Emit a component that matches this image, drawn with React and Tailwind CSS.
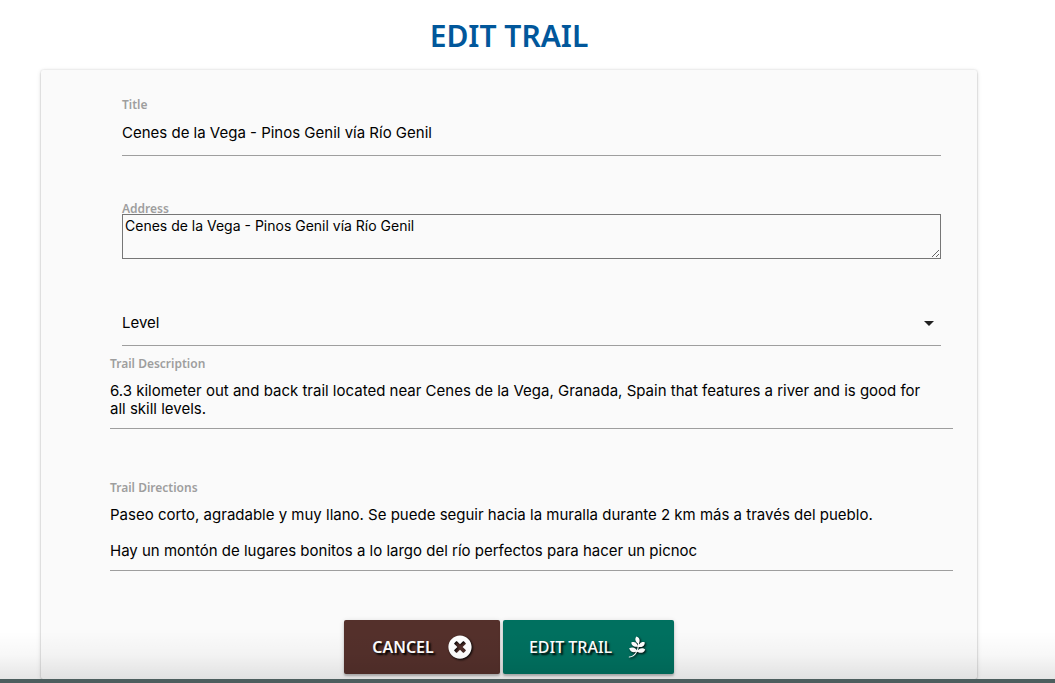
import React from "react";
import { FaTimesCircle, FaPagelines } from "react-icons/fa";

const labelClass = "block text-[12px] font-semibold text-[#9e9e9e] font-['Noto_Sans',sans-serif]";
const lineClass =
  "block w-full border-b border-[#9e9e9e] bg-transparent text-[15px] text-black outline-none font-[Inter,sans-serif]";
const buttonClass =
  "flex h-[54px] items-center justify-center rounded-xs text-base text-white shadow-[0_2px_2px_rgba(0,0,0,0.2),0_1px_5px_rgba(0,0,0,0.15)]";

export default function App() {
  return (
    <div className="relative overflow-hidden bg-white font-['Noto_Sans',sans-serif]">
      <main className="pl-[41px] pr-[78px]">
        <h1 className="pt-4 pb-[14px] text-center text-[30px] leading-10 font-semibold text-[#01579b]">
          EDIT TRAIL
        </h1>
        <form
          className="rounded-xs bg-[#fafafa] pt-[27px] pb-[5px] shadow-[0_2px_2px_rgba(0,0,0,0.14),0_1px_5px_rgba(0,0,0,0.12),0_0_2px_rgba(0,0,0,0.15)]"
          onSubmit={(e) => e.preventDefault()}
        >
          <div className="pr-6 pl-[69px]">
            <div className="px-3">
              <label htmlFor="title" className={`${labelClass} leading-4`}>Title</label>
              <input
                id="title"
                type="text"
                defaultValue="Cenes de la Vega - Pinos Genil vía Río Genil"
                className={`${lineClass} h-[43px] pb-[3px]`}
              />
            </div>
            <div className="px-3 pt-[48px]">
              <label htmlFor="address" className={`${labelClass} leading-[10px]`}>Address</label>
              <textarea
                id="address"
                defaultValue="Cenes de la Vega - Pinos Genil vía Río Genil"
                className="block h-[45px] w-full resize border border-[#767676] bg-transparent px-0.5 py-0.5 text-[14px] leading-[18px] text-black outline-none font-[Inter,sans-serif]"
              />
            </div>
            <div className="grid px-3 pt-[43px]">
              <select
                aria-label="Level"
                defaultValue="Level"
                className={`${lineClass} col-start-1 row-start-1 h-11 appearance-none`}
              >
                <option>Level</option>
              </select>
              <svg
                viewBox="0 0 10 5"
                className="pointer-events-none col-start-1 row-start-1 mr-[7px] mb-0.5 h-[5px] w-[10px] self-center justify-self-end"
                aria-hidden="true"
              >
                <path d="M0 0h10L5 5z" fill="#212121" />
              </svg>
            </div>
            <div className="pt-[10px]">
              <label htmlFor="description" className={`${labelClass} leading-4`}>Trail Description</label>
              <textarea
                id="description"
                defaultValue="6.3 kilometer out and back trail located near Cenes de la Vega, Granada, Spain that features a river and is good for all skill levels."
                className={`${lineClass} h-[57px] resize-none overflow-hidden pt-[10px] pr-4 leading-[18px]`}
              />
            </div>
            <div className="pt-[51px]">
              <label htmlFor="directions" className={`${labelClass} leading-4`}>Trail Directions</label>
              <textarea
                id="directions"
                defaultValue={
                  "Paseo corto, agradable y muy llano. Se puede seguir hacia la muralla durante 2 km más a través del pueblo.\n\nHay un montón de lugares bonitos a lo largo del río perfectos para hacer un picnoc"
                }
                className={`${lineClass} h-[75px] resize-none overflow-hidden pt-[10px] pr-4 leading-[18px]`}
              />
            </div>
          </div>
          <div className="flex justify-center gap-[3px] pt-[49px]">
            <button type="button" className={`${buttonClass} w-[156px] gap-[14px] bg-[#54302b] font-semibold`}>
              <span className="[text-shadow:2px_2px_2px_#000]">CANCEL</span>
              <FaTimesCircle className="size-6 drop-shadow-[1px_1px_1px_#000]" />
            </button>
            <button type="submit" className={`${buttonClass} w-[171px] gap-[14px] bg-[#00705f] font-medium`}>
              <span className="[text-shadow:2px_2px_2px_#000]">EDIT TRAIL</span>
              <FaPagelines className="size-[22px] drop-shadow-[1px_1px_1px_#000]" />
            </button>
          </div>
        </form>
      </main>
      <footer className="relative h-1 bg-[#4d5e5e]">
        <div className="pointer-events-none absolute inset-x-0 bottom-full h-12 bg-linear-to-t from-black/10 via-black/3 to-transparent" />
      </footer>
    </div>
  );
}
